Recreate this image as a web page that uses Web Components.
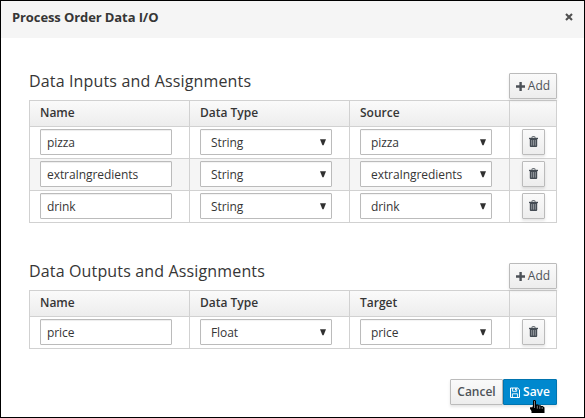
<!DOCTYPE html>
<html lang="en"><head><meta charset="utf-8"><title>Process Order Data I/O</title>
<style>
html,body{margin:0;height:100%;overflow:hidden}
body{font:12px/16px "Open Sans","Noto Sans",sans-serif;color:#363636;background:#fff}
</style></head><body>
<data-dialog heading="Process Order Data I/O">
<assignment-section heading="Data Inputs and Assignments" target="Source">
<assignment-row name="pizza" type="String"></assignment-row>
<assignment-row name="extraIngredients" type="String" striped></assignment-row>
<assignment-row name="drink" type="String"></assignment-row>
</assignment-section>
<assignment-section heading="Data Outputs and Assignments" target="Target">
<assignment-row name="price" type="Float"></assignment-row>
</assignment-section>
<push-button slot="actions" style="width:53px">Cancel</push-button>
<push-button slot="actions" primary style="width:54px"><ui-icon name="save"></ui-icon>Save</push-button>
</data-dialog>
<script>
class Base extends HTMLElement{
  connectedCallback(){ if(!this.shadowRoot){ this.attachShadow({mode:'open'}).innerHTML='<style>*{box-sizing:border-box}:host{box-sizing:border-box}</style>'+this.render(); } }
  a(n){return this.getAttribute(n)||''}
}
const ICONS={
  plus:[9,9,'<path d="M3.4 0h2.4v3.3H9v2.4H5.8V9H3.4V5.7H0V3.3h3.4z" fill="currentColor"/>'],
  trash:[9,11,'<path d="M3 2V.9Q3 .5 3.4.5h2.2q.4 0 .4.4V2" fill="none" stroke="#6b7076"/><path d="M0 1.8h9v1.3H0z" fill="#454c54"/><path d="M.8 3h7.4v7.1q0 .9-.9.9H1.7q-.9 0-.9-.9z" fill="#454c54"/><path d="M2.7 4v5.6M4.5 4v5.6M6.3 4v5.6" stroke="#a5a9ad" stroke-width=".8"/>'],
  save:[10,11,'<path d="M.5 1h7.2l1.8 1.8v7.7h-9z" fill="none" stroke="currentColor"/><path d="M2.6 1v3.3h4.1V1M2.4 10.5V6.8h5.2v3.7" fill="none" stroke="currentColor" stroke-width=".9"/><path d="M5 1.3h1v2H5z" fill="currentColor"/>'],
  close:[8,8,'<path d="M1 1l6 6M7 1L1 7" stroke="#505050" stroke-width="2.1"/>'],
  arrow:[6,7,'<path d="M0 .3h6L3.6 6.3H2.4z" fill="#303030"/>'],
  pointer:[15,13,'<path d="M3 .5L4 0h1l1 1v3.6h2l.8.7h1.7l.7.7h1.5L14.5 7.500V13H1.500V11L0 8.700V7.300h2.500L3 5z" fill="#000"/><path d="M4.500 1v7M7.300 5.700v3M9.800 6.300v2.600M12.200 7v2" stroke="#fff" stroke-width=".5"/>']
};
customElements.define('ui-icon',class extends Base{render(){
  const [w,h,p]=ICONS[this.a('name')];
  return `<style>:host{display:block;flex:none;width:${w}px;height:${h}px}svg{display:block}</style><svg width="${w}" height="${h}" viewBox="0 0 ${w} ${h}">${p}</svg>`}});
customElements.define('push-button',class extends Base{render(){return `<style>
:host{display:flex;align-items:center;justify-content:center;gap:3px;height:26px;border:1px solid #bbb;border-radius:1px;background:linear-gradient(#fafafa,#ededed);color:#4d5258;box-shadow:0 2px 3px rgba(3,3,3,.1);font-weight:600;white-space:nowrap}
:host([primary]){background:#0088ce;border-color:#0074af;color:#fff}</style><slot></slot>`}});
customElements.define('text-field',class extends Base{render(){return `<style>
:host{display:flex;align-items:center;width:132px;height:26px;padding:1px 6px 0;border:1px solid #bbb;border-radius:1px;background:#fff;box-shadow:inset 0 1px 1px rgba(3,3,3,.075);letter-spacing:-.07px}</style><slot></slot>`}});
customElements.define('select-field',class extends Base{render(){return `<style>
:host{display:flex;align-items:center;justify-content:space-between;width:132px;height:26px;padding:1px 5px 0 10px;border:1px solid #bbb;border-radius:1px;background:#fff;box-shadow:inset 0 1px 1px rgba(3,3,3,.05);letter-spacing:-.07px}</style><slot></slot><ui-icon name="arrow"></ui-icon>`}});
const GRID='display:grid;grid-template-columns:160px 160px 160px 47px;';
customElements.define('assignment-row',class extends Base{render(){return `<style>
:host{${GRID}height:32px;border-bottom:1px solid #d1d1d1}
:host([striped]){background:#f5f5f5}
.c{border-right:1px solid #d1d1d1;padding:2px 0 0 10px}
.b{padding:2px 0 0 12px}push-button{width:23px}push-button ui-icon{margin-bottom:1px}</style>
<div class="c"><text-field>${this.a('name')}</text-field></div><div class="c"><select-field>${this.a('type')}</select-field></div><div class="c"><select-field>${this.a('name')}</select-field></div><div class="c b"><push-button><ui-icon name="trash"></ui-icon></push-button></div>`}});
customElements.define('assignment-section',class extends Base{render(){return `<style>
:host{display:block}
header{display:flex;justify-content:space-between;height:27px}
h2{margin:-4px 0 0;font-size:16px;line-height:24px;font-weight:400;letter-spacing:.15px;white-space:nowrap}
header push-button{width:48px;font-weight:500}
.t{border:1px solid #d1d1d1;border-width:1px 0 0 1px}
.h{${GRID}height:26px;border-bottom:1px solid #d1d1d1;background:linear-gradient(#fafafa,#ededed);font-weight:600}
.h div{border-right:1px solid #d1d1d1;padding:4px 0 0 10px}</style>
<header><h2>${this.a('heading')}</h2><push-button><ui-icon name="plus"></ui-icon>Add</push-button></header>
<div class="t"><div class="h"><div>Name</div><div>Data Type</div><div>${this.a('target')}</div><div></div></div><slot></slot></div>`}});
customElements.define('data-dialog',class extends Base{render(){return `<style>
:host{display:flex;flex-direction:column;position:relative;width:585px;height:418px;border:1px solid #000;background:#fff}
.top{display:flex;justify-content:space-between;height:37px;background:#f5f5f5;padding:8px 11px}
h1{margin:0;font-size:13px;line-height:16px;font-weight:700;letter-spacing:-.1px}
.top ui-icon{margin-top:4px}
main{display:flex;flex-direction:column;gap:40px;padding:35px 27px 0 28px}
footer{display:flex;justify-content:flex-end;padding:30px 27px 0}
.p{position:absolute;left:529px;top:399px}</style>
<div class="top"><h1>${this.a('heading')}</h1><ui-icon name="close"></ui-icon></div><main><slot></slot></main><footer><slot name="actions"></slot></footer><ui-icon class="p" name="pointer"></ui-icon>`}});
</script></body></html>
